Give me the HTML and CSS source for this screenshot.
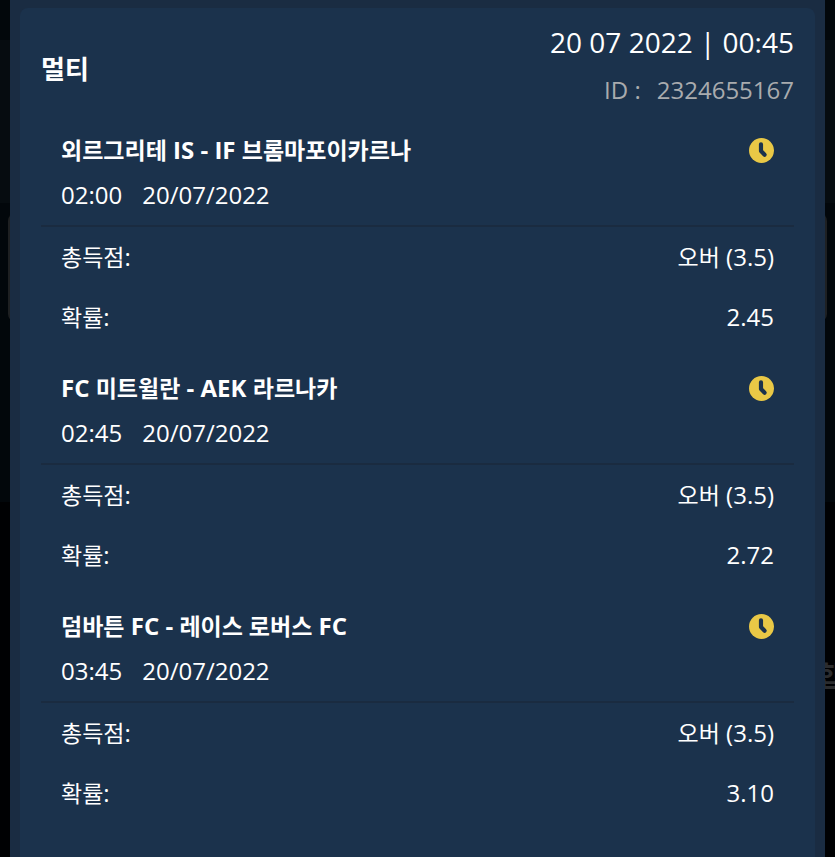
FILE: index.html
```html
<!DOCTYPE html>
<html lang="ko">
<head>
    <meta charset="UTF-8">
    <meta name="viewport" content="width=device-width, initial-scale=1.0">
    <title>멀티</title>
    <link rel="stylesheet" href="styles.css">
</head>
<body>
    <!-- dimmed page behind the modal -->
    <div class="backdrop">
        <div class="backdrop-bar"></div>
        <div class="backdrop-card"></div>
        <div class="backdrop-footer"></div>
        <span class="backdrop-text">합</span>
    </div>

    <main class="modal">
        <section class="bet">
            <header class="bet-header">
                <h1>멀티</h1>
                <div class="bet-info">
                    <div class="bet-date">20 07 2022 | 00:45</div>
                    <div class="bet-id"><span>ID :</span><span>2324655167</span></div>
                </div>
            </header>

            <article class="match">
                <div class="match-head">
                    <h2><span class="ko">외르그리테</span> IS - IF <span class="ko">브롬마포이카르나</span></h2>
                    <svg class="clock" viewBox="0 0 24 24" aria-hidden="true">
                        <circle cx="12" cy="12" r="12"/>
                        <path d="M11.5 6v6.5l3.5 3.5"/>
                    </svg>
                </div>
                <div class="match-time"><span>02:00</span><span>20/07/2022</span></div>
                <dl>
                    <div class="row"><dt><span class="ko">총득점</span>:</dt><dd><span class="ko">오버</span> (3.5)</dd></div>
                    <div class="row"><dt><span class="ko">확률</span>:</dt><dd>2.45</dd></div>
                </dl>
            </article>

            <article class="match">
                <div class="match-head">
                    <h2>FC <span class="ko">미트윌란</span> - AEK <span class="ko">라르나카</span></h2>
                    <svg class="clock" viewBox="0 0 24 24" aria-hidden="true">
                        <circle cx="12" cy="12" r="12"/>
                        <path d="M11.5 6v6.5l3.5 3.5"/>
                    </svg>
                </div>
                <div class="match-time"><span>02:45</span><span>20/07/2022</span></div>
                <dl>
                    <div class="row"><dt><span class="ko">총득점</span>:</dt><dd><span class="ko">오버</span> (3.5)</dd></div>
                    <div class="row"><dt><span class="ko">확률</span>:</dt><dd>2.72</dd></div>
                </dl>
            </article>

            <article class="match">
                <div class="match-head">
                    <h2><span class="ko">덤바튼</span> FC - <span class="ko">레이스 로버스</span> FC</h2>
                    <svg class="clock" viewBox="0 0 24 24" aria-hidden="true">
                        <circle cx="12" cy="12" r="12"/>
                        <path d="M11.5 6v6.5l3.5 3.5"/>
                    </svg>
                </div>
                <div class="match-time"><span>03:45</span><span>20/07/2022</span></div>
                <dl>
                    <div class="row"><dt><span class="ko">총득점</span>:</dt><dd><span class="ko">오버</span> (3.5)</dd></div>
                    <div class="row"><dt><span class="ko">확률</span>:</dt><dd>3.10</dd></div>
                </dl>
            </article>
        </section>
    </main>
</body>
</html>
```

FILE: styles.css
```css
* {
    box-sizing: border-box;
}

body {
    margin: 0;
    background-color: #02070b;
    color: #fff;
    font-family: "Open Sans", "Noto Sans CJK KR", sans-serif;
    font-size: 24px;
    line-height: 32px;
}

h1, h2, dl, dd {
    margin: 0;
}

.backdrop {
    position: fixed;
    inset: 0;
    overflow: hidden;
}

.backdrop-bar {
    position: absolute;
    top: 40px;
    left: 0;
    right: 0;
    height: 163px;
    background-color: #060c10;
}

.backdrop-card {
    position: absolute;
    top: 213px;
    left: 8px;
    right: 8px;
    height: 109px;
    border-radius: 8px;
    background-color: #1e2022;
}

.backdrop-footer {
    position: absolute;
    top: 502px;
    left: 0;
    right: 0;
    bottom: 0;
    background-color: #000103;
}

.backdrop-text {
    position: absolute;
    top: 660px;
    right: -8px;
    font-size: 28px;
    font-weight: 700;
    color: #2b2c2e;
}

.modal {
    position: relative;
    min-height: 100vh;
    margin: 0 10px;
    padding: 8px 10px 0;
    display: flex;
    background-color: #1a2c42;
}

.bet {
    flex: 1;
    padding: 16px 21px 32px;
    border-radius: 8px 8px 0 0;
    background-color: #1b324c;
}

.bet-header {
    display: flex;
    justify-content: space-between;
    align-items: center;
    margin-bottom: 14px;
}

h1 {
    padding-top: 6px;
    font-size: 26px;
    font-weight: 700;
}

.bet-info {
    text-align: right;
}

.bet-date {
    font-size: 28px;
    line-height: 36px;
    margin-bottom: 12px;
}

.bet-id {
    display: flex;
    justify-content: flex-end;
    gap: 16px;
    line-height: 36px;
    color: #a9abae;
}

.match {
    padding-top: 12px;
}

.match-head {
    display: flex;
    justify-content: space-between;
    align-items: center;
    padding: 0 20px;
}

h2 {
    font-size: 24px;
    font-weight: 700;
}

.ko {
    font-size: 23px;
}

.clock {
    width: 25px;
    height: 25px;
}

.clock circle {
    fill: #e9c846;
}

.clock path {
    fill: none;
    stroke: #1b324c;
    stroke-width: 4;
    stroke-linecap: round;
    stroke-linejoin: round;
}

.match-time {
    display: flex;
    gap: 20px;
    padding: 13px 20px 14px;
    border-bottom: 2px solid #1a2b40;
}

.row {
    display: flex;
    justify-content: space-between;
    align-items: center;
    height: 60px;
    padding: 0 20px;
}

.match dl {
    padding-bottom: 13px;
}
```
